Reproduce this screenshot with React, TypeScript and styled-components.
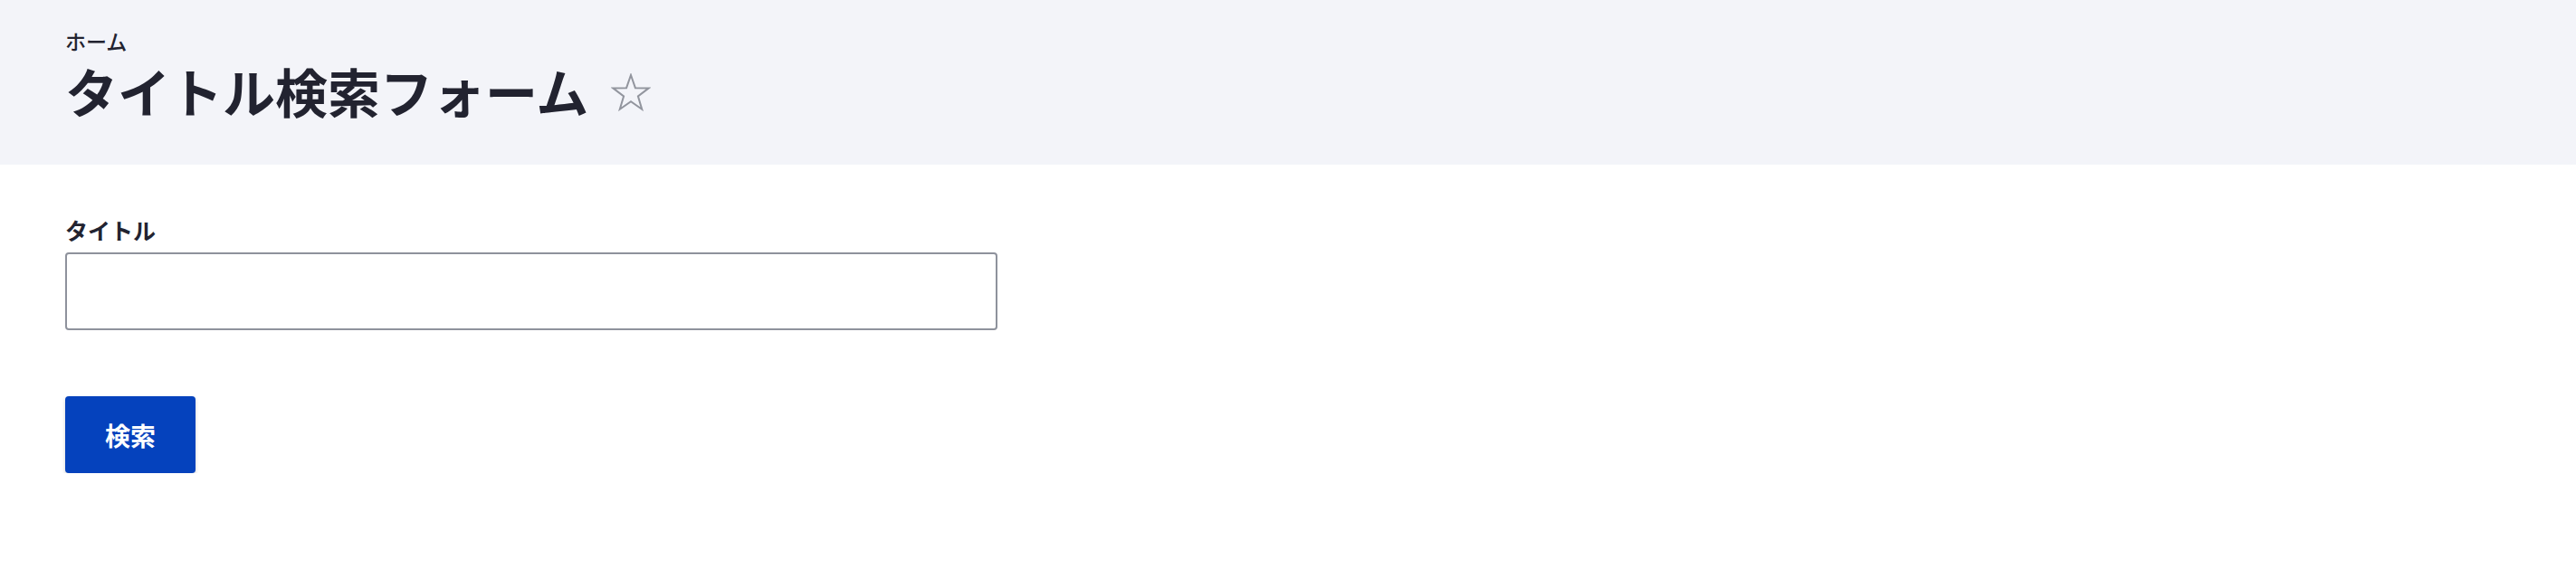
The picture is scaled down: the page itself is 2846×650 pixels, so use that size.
import React from "react";
import styled, { createGlobalStyle } from "styled-components";

const Global = createGlobalStyle`
  html, body { margin: 0; padding: 0; background: #ffffff; }
  body {
    font-family: "Noto Sans CJK JP", "Noto Sans", sans-serif;
    color: #222330;
  }
  * { box-sizing: border-box; }
`;

const Header = styled.header`
  background: #f3f4f9;
  height: 182px;
  padding: 31px 72px 0;
`;

const Breadcrumb = styled.nav`
  font-size: 23px;
  line-height: 28px;
  font-weight: 500;
  color: #222330;
`;

const TitleRow = styled.div`
  display: flex;
  align-items: center;
  gap: 25px;
  margin-top: 6px;
`;

const Title = styled.h1`
  margin: 0;
  font-size: 58px;
  line-height: 70px;
  font-weight: 700;
  color: #222330;
`;

const StarButton = styled.span`
  display: inline-flex;
  width: 44px;
  height: 44px;
  align-items: center;
  justify-content: center;
  margin-top: 4px;
`;

const Main = styled.main`
  padding: 56px 72px 0;
`;

const Field = styled.div`
  display: flex;
  flex-direction: column;
  gap: 9px;
`;

const Label = styled.label`
  font-size: 25px;
  line-height: 32px;
  font-weight: 700;
  color: #222330;
`;

const TextInput = styled.input`
  width: 1030px;
  height: 86px;
  border: 2px solid #8e929c;
  border-radius: 4px;
  background: #fff;
  font-size: 28px;
  padding: 0 20px;
  outline: none;
`;

const Actions = styled.div`
  margin-top: 73px;
`;

const PrimaryButton = styled.button`
  height: 85px;
  padding: 0 44px;
  border: none;
  border-radius: 4px;
  background: #0542bd;
  color: #ffffff;
  font-family: "Noto Sans CJK JP", sans-serif;
  font-size: 28px;
  font-weight: 700;
  box-shadow: 0 2px 4px rgba(0, 0, 0, 0.18);
  cursor: pointer;
`;

const Star = () => (
  <svg width="44" height="42" viewBox="0 0 44 42">
    <path
      d="M22 2 L26.9 16.2 L41.8 16.4 L29.9 25.4 L34.2 39.7 L22 31.1 L9.8 39.7 L14.1 25.4 L2.2 16.4 L17.1 16.2 Z"
      fill="none"
      stroke="#92959e"
      strokeWidth="2"
      strokeLinejoin="miter"
    />
  </svg>
);

export default function App() {
  return (
    <>
      <Global />
      <Header>
        <Breadcrumb>ホーム</Breadcrumb>
        <TitleRow>
          <Title>タイトル検索フォーム</Title>
          <StarButton>
            <Star />
          </StarButton>
        </TitleRow>
      </Header>
      <Main>
        <Field>
          <Label htmlFor="title">タイトル</Label>
          <TextInput id="title" type="text" />
        </Field>
        <Actions>
          <PrimaryButton type="button">検索</PrimaryButton>
        </Actions>
      </Main>
    </>
  );
}
